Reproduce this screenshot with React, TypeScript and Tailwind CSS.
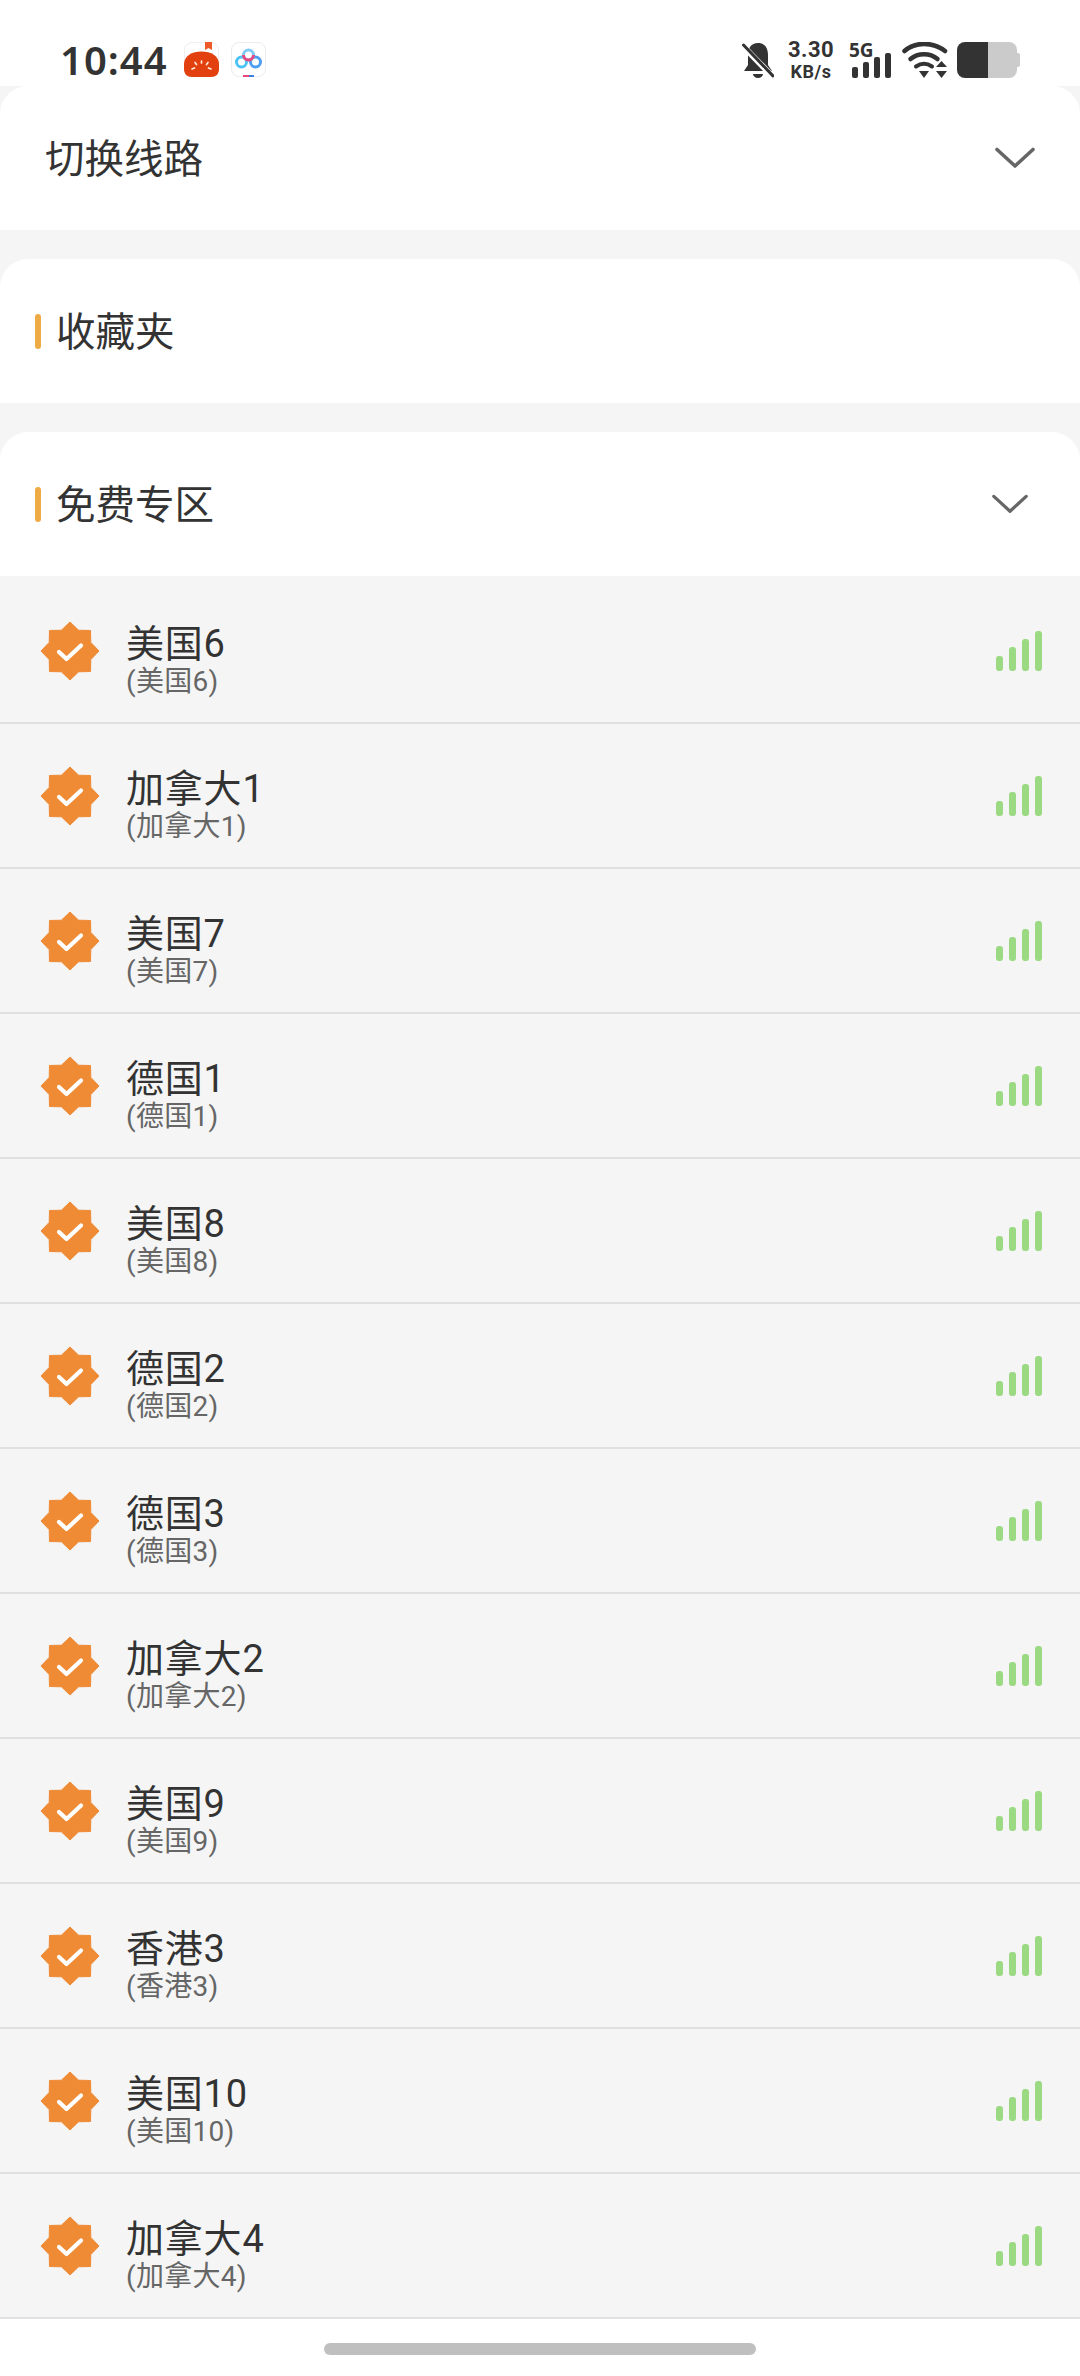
const rows = ["美国6","加拿大1","美国7","德国1","美国8","德国2","德国3","加拿大2","美国9","香港3","美国10","加拿大4"];

const font = { fontFamily: 'Roboto, "Noto Sans CJK SC", sans-serif' };

function Chevron({ className }: { className: string }) {
  return (
    <svg viewBox="0 0 40 22" fill="none" className={className}>
      <path d="M2 2.5 L20 19 L38 2.5" stroke="#666666" strokeWidth="3.6" strokeLinecap="round" strokeLinejoin="round" />
    </svg>
  );
}

function Badge() {
  const pts: string[] = [];
  for (let i = 0; i < 16; i++) {
    const r = i % 2 === 0 ? 29 : 22.5;
    const a = (i * Math.PI) / 8 - Math.PI / 2;
    pts.push(`${(30 + r * Math.cos(a)).toFixed(2)},${(30 + r * Math.sin(a)).toFixed(2)}`);
  }
  return (
    <svg viewBox="0 0 60 60" className="w-[60px] h-[60px] shrink-0">
      <polygon points={pts.join(" ")} fill="#ef8a35" stroke="#ef8a35" strokeWidth="1" strokeLinejoin="round" />
      <path d="M19 31 L26.500 38 L41 24.500" fill="none" stroke="#fff" strokeWidth="4.2" strokeLinecap="round" strokeLinejoin="round" />
    </svg>
  );
}

function Signal() {
  return (
    <svg viewBox="0 0 46 40" className="w-[46px] h-[40px]">
      <rect x="0" y="25" width="7" height="15" rx="3" fill="#9bd982" />
      <rect x="13" y="16" width="7" height="24" rx="3" fill="#9bd982" />
      <rect x="26" y="8" width="7" height="32" rx="3" fill="#9bd982" />
      <rect x="39" y="0" width="7" height="40" rx="3" fill="#9bd982" />
    </svg>
  );
}

function TomatoIcon() {
  return (
    <svg viewBox="0 0 35 35" className="w-[35px] h-[35px]">
      <rect x="0.4" y="0.4" width="34.2" height="34.2" rx="8" fill="#fff" stroke="#e8e8e8" strokeWidth="0.8" />
      <path d="M21 0 H28 V8 L24.5 6 L21 8 Z" fill="#ee5a28" />
      <path d="M0 22 C0 14 8 9.500 17.500 9.500 C27 9.500 35 14 35 22 V27 C35 32 32 35 27 35 H8 C3 35 0 32 0 27 Z" fill="#e2410f" />
      <g stroke="#ffe9d8" strokeWidth="1.7" strokeLinecap="round">
        <path d="M17.500 19 V21" />
        <path d="M11 20.500 L12.500 22.500" />
        <path d="M24 20.500 L22.500 22.500" />
        <path d="M8 27 L10.500 26" />
        <path d="M27 27 L24.500 26" />
      </g>
    </svg>
  );
}

function CloudIcon() {
  return (
    <svg viewBox="0 0 35 35" className="w-[35px] h-[35px]">
      <rect x="0.4" y="0.4" width="34.2" height="34.2" rx="8" fill="#fff" stroke="#e4e4e4" strokeWidth="0.8" />
      <circle cx="10.500" cy="20" r="5" fill="none" stroke="#4cc3f5" strokeWidth="3" />
      <circle cx="24.500" cy="20" r="5" fill="none" stroke="#4d9ef2" strokeWidth="3" />
      <circle cx="17.500" cy="13" r="5" fill="none" stroke="#7fc9f5" strokeWidth="3" />
      <path d="M12.500 13 A5 5 0 0 0 22.500 13" fill="none" stroke="#e8487f" strokeWidth="3" />
      <path d="M12 33 H18 V35 H12 Z" fill="#e8487f" />
      <path d="M18 33 H23 V35 H18 Z" fill="#3f7fe0" />
    </svg>
  );
}

function StatusIcons() {
  const noto = { fontFamily: '"Noto Sans", sans-serif' };
  return (
    <div className="flex items-center h-[36px] mt-[42px] pr-[60px] text-[#333]">
      <svg viewBox="0 0 32 36" className="w-[32px] h-[36px]">
        <path d="M16 1 C9 1 6 6 6 13 V23 L2 29 H30 L26 23 V13 C26 6 23 1 16 1 Z" fill="#333" />
        <path d="M11 32 A5 4 0 0 0 21 32 Z" fill="#333" />
        <path d="M1 4 L31 35" stroke="#fff" strokeWidth="6" />
        <path d="M1.500 3 L31 34" stroke="#333" strokeWidth="3" strokeLinecap="round" />
      </svg>
      <div className="ml-[13px] w-[48px] flex flex-col items-center font-bold" style={{ fontFamily: 'Roboto, sans-serif' }}>
        <span className="text-[22px] leading-[24px] tracking-[0.5px]">3.30</span>
        <span className="text-[18px] leading-[20px] tracking-[0.5px]">KB/s</span>
      </div>
      <div className="relative ml-[14px] w-[44px] h-[36px]">
        <span className="absolute left-0 -top-[1px] text-[19px] leading-[18px] font-bold" style={noto}>5G</span>
        <svg viewBox="0 0 40 25" className="absolute left-[3px] top-[11px] w-[40px] h-[25px]">
          <rect x="0" y="14" width="6" height="11" rx="2" fill="#333" />
          <rect x="11" y="9" width="6" height="16" rx="2" fill="#333" />
          <rect x="22" y="4" width="6" height="21" rx="2" fill="#333" />
          <rect x="33" y="0" width="6" height="25" rx="2" fill="#333" />
        </svg>
      </div>
      <svg viewBox="0 0 46 36" className="ml-[9px] w-[46px] h-[36px]">
        <path d="M2.500 9 C13 -0.500 31 -0.500 43 9" fill="none" stroke="#333" strokeWidth="4.500" strokeLinecap="round" />
        <path d="M8.500 17 C16 10.500 28 10.500 35.500 17" fill="none" stroke="#333" strokeWidth="4.500" strokeLinecap="round" />
        <path d="M14 24.500 C19 21 25 21 30 24.500" fill="none" stroke="#333" strokeWidth="4" strokeLinecap="round" />
        <path d="M17 29 H27 L22 36 Z" fill="#333" />
        <path d="M34 25 H45 L39.500 19 Z" fill="#333" />
        <path d="M34 29 H45 L39.500 36 Z" fill="#333" />
      </svg>
      <div className="relative ml-[9px] w-[60px] h-[36px] flex overflow-hidden rounded-[8px]">
        <div className="w-[31px] bg-[#333]" />
        <div className="flex-1 bg-[#cbcbcb]" />
      </div>
      <div className="w-[3px] h-[14px] bg-[#cbcbcb] rounded-r-[2px]" />
    </div>
  );
}

function Marker() {
  return <div className="w-[6px] h-[35px] rounded-[3px] bg-[#eeaa44] shrink-0" />;
}

export default function App() {
  return (
    <div className="w-[1080px] h-[2376px] bg-white flex flex-col overflow-hidden" style={font}>
      <div className="h-[86px] flex justify-between items-start shrink-0">
        <div className="flex items-start pl-[60px] mt-[42px]">
          <span className="text-[40px] leading-[36px] font-semibold text-[#333] tracking-[1px]" style={{ fontFamily: '"Noto Sans", sans-serif' }}>10:44</span>
          <div className="ml-[16px]"><TomatoIcon /></div>
          <div className="ml-[12px]"><CloudIcon /></div>
        </div>
        <StatusIcons />
      </div>

      <div className="bg-[#f5f5f5] flex flex-col flex-1">
        <div className="h-[144px] bg-white rounded-t-[28px] flex items-center justify-between pl-[45px] pr-[45px] shrink-0">
          <span className="text-[39.5px] leading-[44px] mt-[4px] text-[#333]">切换线路</span>
          <Chevron className="w-[40px] h-[22px]" />
        </div>

        <div className="h-[144px] mt-[29px] bg-white rounded-t-[28px] flex items-center gap-[15px] pl-[35px] shrink-0">
          <Marker />
          <span className="text-[39.5px] leading-[44px] mt-[4px] text-[#333]">收藏夹</span>
        </div>

        <div className="h-[144px] mt-[29px] bg-white rounded-t-[28px] flex items-center justify-between pl-[35px] pr-[52px] shrink-0">
          <div className="flex items-center gap-[15px]">
            <Marker />
            <span className="text-[39.5px] leading-[44px] mt-[4px] text-[#333]">免费专区</span>
          </div>
          <Chevron className="w-[36px] h-[20px]" />
        </div>

        <div className="flex flex-col pt-[3px] shrink-0">
          {rows.map((r) => (
            <div key={r} className="h-[145px] shrink-0 border-b-2 border-[#e0e0e0] flex items-center pl-[40px] pr-[38px]">
              <Badge />
              <div className="ml-[26px] pt-[18px] flex-1 flex flex-col">
                <span className="text-[38px] leading-[45px] tracking-[0.8px] text-[#333]">{r}</span>
                <span className="text-[28px] leading-[30px] tracking-[0.3px] text-[#666]">({r})</span>
              </div>
              <Signal />
            </div>
          ))}
        </div>

        <div className="flex-1 bg-white flex justify-center pt-[24px]">
          <div className="w-[432px] h-[12px] rounded-full bg-[#bfbfbf]" />
        </div>
      </div>
    </div>
  );
}
